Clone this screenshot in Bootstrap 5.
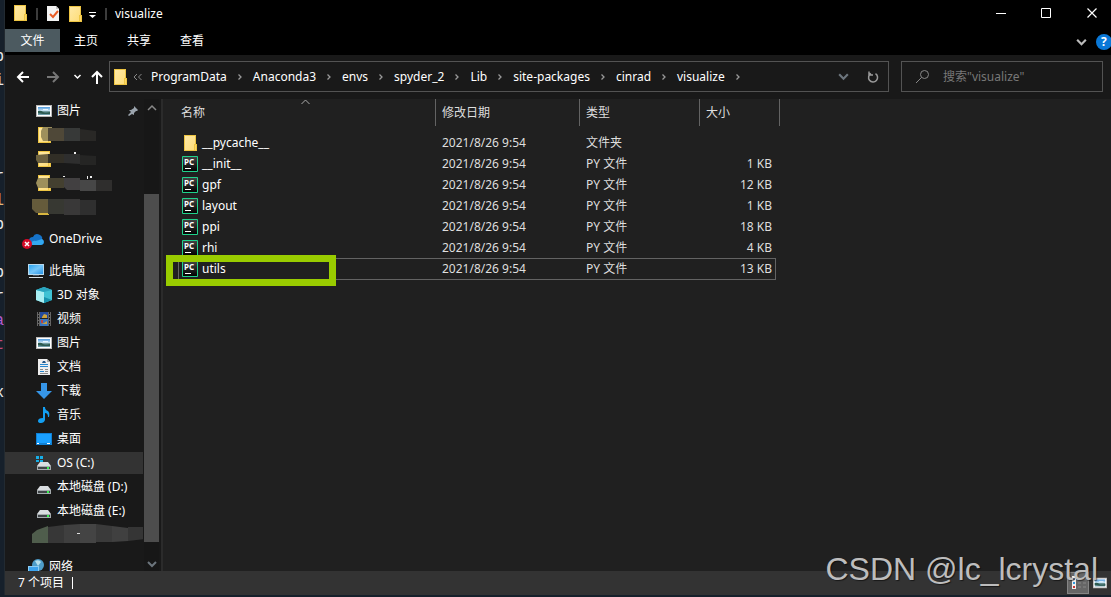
<!DOCTYPE html>
<html lang="zh-CN" data-bs-theme="dark">
<head>
<meta charset="utf-8">
<meta name="viewport" content="width=device-width, initial-scale=1">
<title>visualize</title>
<link href="https://cdn.jsdelivr.net/npm/bootstrap@5.3.0/dist/css/bootstrap.min.css" rel="stylesheet">
<style>
body{background:#16202b;font-family:"Noto Sans","Noto Sans CJK SC",sans-serif;font-size:12px;line-height:20px;color:#fff}
svg{display:block;flex-shrink:0}
a{color:inherit;text-decoration:none}
button{background:none;border:0;padding:0;color:inherit}
.behind{width:4px;padding-top:45px;font:16px/24px "Liberation Mono",monospace;color:#e8e8e8}
.behind div{height:24px;display:flex;justify-content:flex-end}
.win{background:#191919;border-left:1px solid #222a31;margin-bottom:2px;min-width:0}
.titlebar{height:29px;background:#000;padding-left:7px}
.vbar{width:2px;height:12px;background:#3c3c3c}
.ribbon{height:26px;background:#000}
.ribbon .tab{height:23px;padding:0 14px;line-height:24px;margin-right:1px}
.ribbon .file{background:#4c5a60;width:55px;text-align:center;padding:0;margin-right:0}
.address{height:44px;padding:6px 8px 7px 10px}
.box{border:1px solid #535353;height:31px}
.crumb{width:26px}
.search{width:202px;padding-left:13px}
.search input{background:none;border:0;outline:0;color:#fff;font-size:12px;width:100%;min-width:0;padding:0}
.search input::placeholder{color:#777;opacity:1}
.workarea{flex:1 1 0;min-height:0}
.side{width:138px}
.side .item{height:24px;gap:5px;padding-left:31px;white-space:nowrap}
.side .top-item{padding-left:23px;margin-top:8px}
.side .cloud-item{padding-left:17px}
.side .active-item{background:#333;height:22px;margin:1px 0}
.side .masked{padding-left:27px}
.scroller{width:15px;margin:0 2px 0 1px;background:#171717}
.thumb{height:348px;background:#4d4d4d;margin-top:75px}
.files{background:#202020;border-left:2px solid #2b2b2b;padding-left:15px}
.filetable{width:602px;table-layout:fixed;border-collapse:separate;border-spacing:0;color:#dedede}
.filetable th{height:27px;font-weight:400;border-right:1px solid #636363;padding:0 6px;position:relative}
.filetable th:first-child,.filetable td:first-child{padding-left:3px}
.filetable td{height:21px;padding:0 7px 0 6px;line-height:20px;position:relative}
.filetable td:last-child{text-align:right;padding-right:8px}
.filetable tbody::before{content:"";display:block;height:6px}
.filename{gap:3px;color:#fff}
.sortmark{position:absolute;left:123px;top:0}
.picked{position:relative}
.picked::after{content:"";position:absolute;inset:0 4px -1px 0;border:1px solid #636363}
.marker{position:absolute;left:-12px;top:-3px;width:170px;height:31px;border:7px solid #9c0;z-index:2}
.status{height:24px;background:#333;padding-left:13px;position:relative}
.caret{width:1px;height:12px;background:#fff}
.viewbtn{background:#666;border:1px solid #858585;width:22px;height:22px}
.watermark{position:absolute;right:13px;bottom:8px;font:32px/36px "Liberation Sans",sans-serif;color:#bdbdbd;text-shadow:1px 1px 1px #0008;white-space:nowrap}
</style>
</head>
<body>
<svg width="0" height="0" class="position-absolute">
<defs>
<linearGradient id="gf" x2="1" y2="1"><stop stop-color="#ffe9a6"/><stop offset="1" stop-color="#fedd79"/></linearGradient>
<linearGradient id="gs" x2="0" y2="1"><stop stop-color="#4f9ade"/><stop offset=".5" stop-color="#d4ecf5"/><stop offset=".6" stop-color="#3c6c6b"/><stop offset="1" stop-color="#7aa5b5"/></linearGradient>
<linearGradient id="gb" x2="1" y2="1"><stop stop-color="#2ba6f2"/><stop offset=".5" stop-color="#75c6fa"/><stop offset="1" stop-color="#2893e6"/></linearGradient>
<linearGradient id="gp" x2="0" y2="1"><stop stop-color="#444"/><stop offset="1" stop-color="#000"/></linearGradient>
<symbol id="folder" viewBox="0 0 16 16"><path d="M2 0h12v9h1v7H2z" fill="#eec543"/><path d="M3 1h10v8h-1v6H3z" fill="url(#gf)"/><path d="M13 10h1v5h-1z" fill="#fbd667"/></symbol>
<symbol id="pic" viewBox="0 0 16 16"><path d="M0 2h16v12H0z" fill="#b9b9b9"/><path d="M1 3h14v10H1z" fill="#fff"/><path d="M2 4h12v8H2z" fill="url(#gs)"/><path d="M2 8q3-1 5 1t7 0v2H7L2 10z" fill="#2d5b50"/><path d="M7 6h5v1H7z" fill="#e9f5ff"/></symbol>
<symbol id="drive" viewBox="0 0 16 16"><path d="M4 6h8l3 4H1z" fill="#d9dde0"/><path d="M1 10h14v4H1z" fill="#a5abae"/><path d="M2 11h12v2H2z" fill="#404548"/><path d="M11 11h2v2h-2z" fill="#35f34d"/></symbol>
<symbol id="py" viewBox="0 0 16 16"><path d="M.5.5h15v15H.5z" fill="url(#gp)" stroke="#20d18b"/><path d="M3 12h6v1H3z" fill="#fff"/><text x="2" y="9" font-family="Noto Sans" font-size="8" font-weight="700" fill="#fff">PC</text></symbol>
<symbol id="chev" viewBox="0 0 8 8"><path d="M2.500 1.500L5 4 2.500 6.500" fill="none" stroke="#999" stroke-width="1.300"/></symbol>
<symbol id="down" viewBox="0 0 12 12"><path d="M2 4l4 4 4-4" fill="none" stroke="currentColor" stroke-width="2"/></symbol>
</defs>
</svg>
<div class="d-flex vh-100 overflow-hidden">
<div class="behind overflow-hidden flex-shrink-0" aria-hidden="true">
<div>b</div><div>i</div><div></div><div></div><div></div><div>r</div><div style="color:#e2b877">l</div><div>b</div><div></div><div>b</div><div>r</div><div style="color:#b45bcf">a</div><div style="color:#c64a78">t</div><div></div><div>x</div>
</div>
<div class="win d-flex flex-column flex-grow-1">
<header class="titlebar d-flex align-items-start">
<svg class="me-2" width="16" height="22" viewBox="0 0 16 22"><use href="#folder" y="5" width="16" height="16"/></svg>
<span class="vbar mt-2"></span>
<svg class="ms-2 mt-1" width="16" height="18" viewBox="2 0 16 18"><path d="M3 2h9l3 3v12H3z" fill="#f3f3f3"/><path d="M12 2v3h3" fill="#c5c5c5"/><path d="M6 10l3 3 5-6" fill="none" stroke="#e85b24" stroke-width="2"/></svg>
<svg class="ms-1 mt-1" width="18" height="18" viewBox="0 0 18 18"><use href="#folder" x="1" y="2" width="16" height="16"/></svg>
<svg class="ms-1 mt-2" width="9" height="12" viewBox="0 0 9 12"><path d="M1 4h7v1H1zM1 7h7L4.500 10z" fill="#fff"/></svg>
<span class="vbar mt-2 ms-2"></span>
<span class="ms-2 pt-1 flex-grow-1">visualize</span>
<button aria-label="最小化" class="me-4"><svg width="26" height="27" viewBox="0 0 26 27"><path d="M11 13.500h10" stroke="#fff"/></svg></button>
<button aria-label="最大化" class="me-4"><svg width="22" height="27" viewBox="0 0 22 27"><path d="M6.500 8.500h9v9h-9z" fill="none" stroke="#fff"/></svg></button>
<button aria-label="关闭" class="me-2"><svg width="22" height="27" viewBox="0 0 22 27"><path d="M6.500 8.500l9 9m0-9l-9 9" stroke="#fff" stroke-width="1.200"/></svg></button>
</header>
<nav class="ribbon d-flex">
<a href="#" class="tab file">文件</a><a href="#" class="tab">主页</a><a href="#" class="tab">共享</a><a href="#" class="tab flex-grow-1">查看</a>
<button aria-label="展开功能区" class="me-2" style="color:#bbb"><svg width="13" height="14"><use href="#down"/></svg></button>
<button aria-label="帮助"><svg width="15" height="18" viewBox="0 0 15 18"><circle cx="8" cy="9" r="8" fill="#0a78d7"/><text x="5" y="13" font-size="12" font-weight="700" fill="#fff">?</text></svg></button>
</nav>
<div class="address d-flex align-items-center">
<button aria-label="后退"><svg width="16" height="16" viewBox="0 0 16 16"><path d="M14 8H3m5-5L3 8l5 5" fill="none" stroke="#fff" stroke-width="2"/></svg></button>
<button aria-label="前进" class="ms-3"><svg width="14" height="16" viewBox="0 0 14 16"><path d="M0 8h11M6 3l5 5-5 5" fill="none" stroke="#777" stroke-width="2"/></svg></button>
<button aria-label="最近" class="ms-2 ps-1"><svg width="9" height="9"><use href="#down"/></svg></button>
<button aria-label="上移" class="ms-2 me-1"><svg width="15" height="16" viewBox="0 0 15 16"><path d="M7 15V3M2 8l5-5 5 5" fill="none" stroke="#fff" stroke-width="2"/></svg></button>
<div class="box d-flex align-items-center flex-grow-1 me-2 text-nowrap">
<svg width="19" height="16" viewBox="0 0 19 16"><use href="#folder" x="2" width="16" height="16"/></svg>
<svg class="ms-1 me-2" width="10" height="8" viewBox="0 0 10 8"><path d="M4 1L1 4l3 3M8.500 1l-3 3 3 3" fill="none" stroke="#888"/></svg>
<a href="#">ProgramData</a><svg class="crumb" height="8"><use href="#chev"/></svg>
<a href="#">Anaconda3</a><svg class="crumb" height="8"><use href="#chev"/></svg>
<a href="#">envs</a><svg class="crumb" height="8"><use href="#chev"/></svg>
<a href="#">spyder_2</a><svg class="crumb" height="8"><use href="#chev"/></svg>
<a href="#">Lib</a><svg class="crumb" height="8"><use href="#chev"/></svg>
<a href="#">site-packages</a><svg class="crumb" height="8"><use href="#chev"/></svg>
<a href="#">cinrad</a><svg class="crumb" height="8"><use href="#chev"/></svg>
<a href="#">visualize</a><svg class="crumb" height="8"><use href="#chev"/></svg>
<button aria-label="历史" class="ms-auto text-secondary"><svg width="13" height="13"><use href="#down" width="13" height="13"/></svg></button>
<button aria-label="刷新" class="ms-3 me-2"><svg width="14" height="14" viewBox="0 0 14 14"><path d="M9.500 3.700A4.500 4.500 0 1 1 5 3.500M3 1.500V5h4" fill="none" stroke="#999" stroke-width="1.500"/></svg></button>
</div>
<label class="box search d-flex align-items-center ms-1"><svg class="me-2" width="16" height="16" viewBox="0 0 16 16"><circle cx="9.500" cy="5.500" r="4" fill="none" stroke="#888"/><path d="M6.500 8.500L1 14" stroke="#888"/></svg><input type="search" class="ms-1" aria-label="搜索" placeholder='搜索"visualize"'></label>
</div>
<main class="workarea d-flex overflow-hidden">
<nav class="side overflow-hidden flex-shrink-0">
<a href="#" class="item d-flex align-items-center"><svg width="16" height="16"><use href="#pic"/></svg><span class="flex-grow-1">图片</span><svg class="me-1" width="12" height="12" viewBox="0 0 12 12"><path d="M7 1l4 4-1 1H9L7 8v2L5 9 2 11 1 10l3-3-2-2h2l3-2z" fill="#9ba4ad"/></svg></a>
<a href="#" aria-label="文件夹" class="item masked d-flex align-items-center"><svg width="84" height="24" viewBox="0 0 84 24"><use href="#folder" x="4" y="4" width="16" height="16"/><path d="M11 4h9v14h-9l-2-4V8z" fill="#9e905c"/><path d="M16 5h16v13H16z" fill="#4f4838"/><path d="M32 5h16v13H32z" fill="#373938"/><path d="M48 6l16 2v10H48z" fill="#292826"/></svg></a>
<a href="#" aria-label="文件夹" class="item masked d-flex align-items-center"><svg width="84" height="24" viewBox="0 0 84 24"><use href="#folder" x="4" y="4" width="16" height="16"/><path d="M4 8l12-1v9H6l-2-3z" fill="#6d6240"/><path d="M16 7h16v9H16z" fill="#312e26"/><path d="M32 7h16v10l-16-1z" fill="#2e2e2e"/><path d="M48 8l16 1v9H48z" fill="#252524"/><path d="M42 5h2v2h-2z" fill="#eee"/></svg></a>
<a href="#" aria-label="文件夹" class="item masked d-flex align-items-center"><svg width="84" height="24" viewBox="0 0 84 24"><use href="#folder" x="4" y="4" width="16" height="16"/><path d="M6 7h10v10H6l-2-5z" fill="#9e905c"/><path d="M16 7h16v10H16z" fill="#444030"/><path d="M32 7h16v12H35l-3-3z" fill="#424041"/><path d="M48 9h16v11H48z" fill="#474747"/><path d="M64 9h16v11H64z" fill="#2f2e2d"/><path d="M31 5h2v1h-2zM55 5h1v3h-1zM58 5h2v2h-2z" fill="#eee"/></svg></a>
<a href="#" aria-label="文件夹" class="item masked d-flex align-items-center"><svg width="84" height="24" viewBox="0 0 84 24"><path d="M6 18h11v2H6z" fill="#d8b63f"/><path d="M0 4h16v14H4l-4-4z" fill="#655b3b"/><path d="M16 4h16v15H16z" fill="#373832"/><path d="M32 4h16v16H32z" fill="#393838"/><path d="M48 5h16v15H48z" fill="#2f2f2f"/></svg></a>
<a href="#" class="item top-item cloud-item d-flex align-items-center"><svg width="22" height="20" viewBox="1 0 22 20"><path d="M8 12q0-4 4-4 2-5 7-2 3 2 2 4 2 1 2 4-1 2-3 2h-9q-3-1-3-4z" fill="#1673c9"/><path d="M10 15q1-4 5-3l6-2q3 2 1 5l-2 1H11z" fill="#33a8ef"/><circle cx="6" cy="15" r="5" fill="#d40b28"/><path d="M4 13l4 4m0-4l-4 4" stroke="#fff" stroke-width="1.500"/></svg>OneDrive</a>
<a href="#" class="item top-item d-flex align-items-center"><svg width="16" height="16" viewBox="0 0 16 16"><path d="M0 1h16v11H0z" fill="#b8d9ed"/><path d="M1 2h14v9H1z" fill="url(#gb)"/><path d="M5 12h6v1H5z" fill="#456"/><path d="M1 14h14v1H1z" fill="#d8e2e8"/></svg>此电脑</a>
<a href="#" class="item d-flex align-items-center"><svg width="16" height="16" viewBox="0 0 16 16"><path d="M8 0l8 3v10l-8 3-8-3V3z" fill="#3fc2d4"/><path d="M0 3l8 2v11l-8-3z" fill="#a9eef2"/><path d="M8 0l8 3-8 2-8-2z" fill="#2aa4be"/><path d="M8 10l8 3-8 3z" fill="#1793ad"/></svg>3D 对象</a>
<a href="#" class="item d-flex align-items-center"><svg width="16" height="16" viewBox="0 0 16 16"><path d="M1 1h14v14H1z" fill="#666"/><path d="M2.500 1v14M13.500 1v14" stroke="#191919" stroke-dasharray="2 1"/><path d="M4 1h8v7H4z" fill="#244b9b"/><path d="M4 8h8v7H4z" fill="#3975c0"/><path d="M6 6l2-3 3 1v3H6zM5 13l3-1 3-2v3z" fill="#cda33c"/><path d="M5 9h2v3H5z" fill="#b44"/><path d="M4 7.500h8" stroke="#222"/></svg>视频</a>
<a href="#" class="item d-flex align-items-center"><svg width="16" height="16"><use href="#pic"/></svg>图片</a>
<a href="#" class="item d-flex align-items-center"><svg width="16" height="16" viewBox="0 0 16 16"><path d="M2 0h9l3 3v13H2z" fill="#eee"/><path d="M11 0v3h3" fill="#aaa"/><path d="M4 5.500h8M4 7.500h8M4 12.500h4" stroke="#2787cf"/><path d="M4 10.500h3M9 10.500h3M9 12.500h3M4 14.500h8" stroke="#888"/><path d="M7 2h2l1 2H6z" fill="#258"/></svg>文档</a>
<a href="#" class="item d-flex align-items-center"><svg width="16" height="16" viewBox="0 0 16 16"><path d="M5 0h6v8h5l-8 8-8-8h5z" fill="#3696e8"/></svg>下载</a>
<a href="#" class="item d-flex align-items-center"><svg width="16" height="16" viewBox="0 0 16 16"><path d="M7 0h2q0 3 3 4 2 2 1 6h-1q0-4-3-4v7q-1 3-4 3-3 0-3-2 0-3 5-3z" fill="#139ff2"/></svg>音乐</a>
<a href="#" class="item d-flex align-items-center"><svg width="16" height="16" viewBox="0 0 16 16"><path d="M0 2h16v12H0z" fill="#1081d5"/><path d="M1 3h14v9H1z" fill="#1aa0ff"/><path d="M1 12.500h2M11 12.500h3" stroke="#fff"/></svg>桌面</a>
<a href="#" class="item active-item d-flex align-items-center"><svg width="16" height="16" viewBox="0 0 16 16"><use href="#drive" y="1"/><path d="M0 1h3v3H0zM4 1h3v3H4zM0 5h3v2H0zM4 5h3v2H4z" fill="#16aee7"/></svg>OS (C:)</a>
<a href="#" class="item d-flex align-items-center"><svg width="16" height="16"><use href="#drive" y="1"/></svg>本地磁盘 (D:)</a>
<a href="#" class="item d-flex align-items-center"><svg width="16" height="16"><use href="#drive" y="1"/></svg>本地磁盘 (E:)</a>
<a href="#" aria-label="磁盘" class="item masked d-flex align-items-center"><svg width="116" height="24" viewBox="0 0 116 24"><path d="M0 11l5-4 11-4v17H0z" fill="#4f5d4c"/><path d="M16 4l16-2v18H16z" fill="#373737"/><path d="M32 2l16-1v19H32z" fill="#3f3f3f"/><path d="M48 1h16v19H48z" fill="#444"/><path d="M64 1l16 2v16H64z" fill="#3a3a3a"/><path d="M80 3l16 2v13l-16 1z" fill="#404040"/><path d="M96 4h16v12l-16 2z" fill="#353535"/><path d="M45 10h3v1h-3z" fill="#ddd"/></svg></a>
<a href="#" class="item top-item d-flex align-items-center"><svg width="16" height="16" viewBox="0 0 16 16"><circle cx="10" cy="6" r="6" fill="#4e9dca"/><path d="M7 2q4-2 6 1l-3 4z" fill="#b6e0ee"/><path d="M0 7h11v7H0z" fill="#8dcdf4"/><path d="M1 8h9v5H1z" fill="#3ca3ee"/></svg>网络</a>
</nav>
<div class="scroller d-flex flex-column flex-shrink-0 align-items-center">
<svg width="12" height="20" viewBox="0 0 12 20"><path d="M2 11l4-4 4 4" fill="none" stroke="#888" stroke-width="1.500"/></svg>
<div class="thumb w-100"></div>
<svg class="mt-3 text-secondary" width="12" height="12"><use href="#down"/></svg>
</div>
<section class="files flex-grow-1">
<table class="filetable">
<colgroup><col style="width:258px"><col style="width:144px"><col style="width:120px"><col style="width:80px"></colgroup>
<thead><tr><th>名称<svg class="sortmark" width="9" height="6" viewBox="0 0 9 6"><path d="M.5 5l4-4 4 4" fill="none" stroke="#aaa"/></svg></th><th>修改日期</th><th>类型</th><th>大小</th></tr></thead>
<tbody>
<tr><td><div class="filename d-flex align-items-center"><svg width="18" height="16" viewBox="0 0 18 16"><use href="#folder" width="16" height="16" x="1"/></svg>__pycache__</div></td><td>2021/8/26 9:54</td><td>文件夹</td><td></td></tr>
<tr><td><div class="filename d-flex align-items-center"><svg width="18" height="16"><use href="#py" width="16" height="16" x="1"/></svg>__init__</div></td><td>2021/8/26 9:54</td><td>PY 文件</td><td>1 KB</td></tr>
<tr><td><div class="filename d-flex align-items-center"><svg width="18" height="16"><use href="#py" width="16" height="16" x="1"/></svg>gpf</div></td><td>2021/8/26 9:54</td><td>PY 文件</td><td>12 KB</td></tr>
<tr><td><div class="filename d-flex align-items-center"><svg width="18" height="16"><use href="#py" width="16" height="16" x="1"/></svg>layout</div></td><td>2021/8/26 9:54</td><td>PY 文件</td><td>1 KB</td></tr>
<tr><td><div class="filename d-flex align-items-center"><svg width="18" height="16"><use href="#py" width="16" height="16" x="1"/></svg>ppi</div></td><td>2021/8/26 9:54</td><td>PY 文件</td><td>18 KB</td></tr>
<tr><td><div class="filename d-flex align-items-center"><svg width="18" height="16"><use href="#py" width="16" height="16" x="1"/></svg>rhi</div></td><td>2021/8/26 9:54</td><td>PY 文件</td><td>4 KB</td></tr>
<tr class="picked"><td><div class="filename d-flex align-items-center"><svg width="18" height="16"><use href="#py" width="16" height="16" x="1"/></svg>utils</div><span class="marker"></span></td><td>2021/8/26 9:54</td><td>PY 文件</td><td>13 KB</td></tr>
</tbody>
</table>
</section>
</main>
<footer class="status d-flex align-items-center">
<span>7 个项目</span><span class="caret ms-2"></span>
<button aria-label="详细信息" class="viewbtn ms-auto me-1"><svg width="20" height="20" viewBox="0 0 20 20"><path d="M4 3h4v13H4z" fill="#eee"/><path d="M5 5h2v2H5z" fill="#468"/><path d="M5 9h2v2H5z" fill="#39d"/><path d="M5 13h2v2H5z" fill="#c33"/><path d="M10 6h3m2 0h3m-8 4h3m2 0h3m-8 4h3m2 0h3" stroke="#888"/></svg></button>
<button aria-label="大图标" class="me-1"><svg width="14" height="16" viewBox="0 0 16 16"><use href="#pic"/></svg></button>
<span class="watermark">CSDN @lc_lcrystal</span>
</footer>
</div>
</div>
<script src="https://cdn.jsdelivr.net/npm/bootstrap@5.3.0/dist/js/bootstrap.bundle.min.js"></script>
</body>
</html>
